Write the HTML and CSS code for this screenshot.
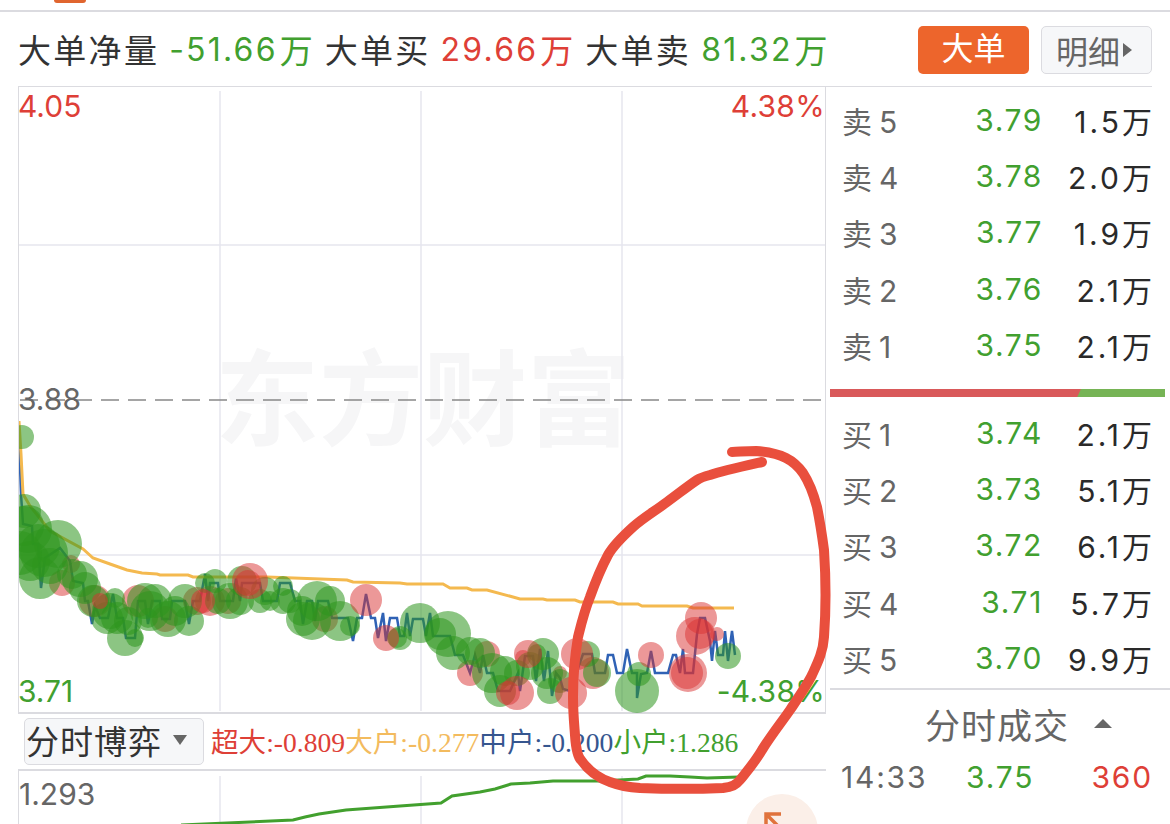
FILE: index.html
```html
<!DOCTYPE html>
<html>
<head>
  <meta name="viewport" content="width=device-width, initial-scale=1">
  <link rel="stylesheet" href="styles.css">
</head>
<body>
<div class="page">
  <div class="topbar"><div class="toptab"></div></div>

  <div class="head">
    <div class="summary">
      <span class="name">大单净量</span><span class="num green">-51.66</span><span class="unit green">万</span>
      <span class="name">大单买</span><span class="num red">29.66</span><span class="unit red">万</span>
      <span class="name">大单卖</span><span class="num green">81.32</span><span class="unit green">万</span>
    </div>
    <div class="btn-on">大单</div>
    <div class="btn-off">明细<span class="arrow-right"></span></div>
  </div>

  <div class="main">
    <div class="left">
      <div class="chart">
        <div class="watermark">东方财富</div>
        <svg class="plot" viewBox="18 86 808 627" width="808" height="627">
          <defs><clipPath id="plotclip"><rect x="19" y="87" width="806" height="625"/></clipPath></defs>
          <g class="grid">
            <path d="M220 90V710M421 90V710M622 90V710M19 244H825M19 554H825"/>
          </g>
          <path class="dash" d="M20 399H825"/>
          <g clip-path="url(#plotclip)">
            <polyline class="line-blue" points="19,437 21,493 23,523 32,525 33,543 38,543 41,587 45,557 60,547 70,560 73,580 83,582 85,600 88,600 92,623 95,605 100,617 108,617 113,593 117,617 123,617 126,637 135,637 138,600 145,600 148,623 152,600 160,600 162,618 170,618 172,600 185,600 189,623 193,600 200,600 205,573 208,600 210,582 218,582 220,600 233,600 236,577 240,600 242,582 260,582 263,600 277,600 280,582 290,582 295,600 300,600 303,623 307,600 312,600 315,620 318,600 328,600 332,617 348,617 353,640 357,617 362,617 366,593 371,617 375,617 378,637 383,612 386,640 390,617 397,617 400,635 404,635 407,612 410,635 413,618 423,618 426,635 430,612 433,635 450,635 455,654 463,654 470,672 475,654 480,672 483,654 487,672 493,672 498,690 510,690 518,672 520,690 525,655 533,655 536,680 540,648 544,680 548,650 552,695 556,672 560,677 563,688 570,690 583,653 592,653 595,672 605,672 608,654 613,654 617,672 623,672 627,648 632,672 637,672 637,697 641,673 647,672 651,650 655,672 668,672 673,654 676,654 680,672 683,648 685,672 693,672 697,633 700,617 705,617 710,640 712,660 715,630 718,654 723,654 725,630 728,660 732,630 735,654"/>
            <polyline class="line-yellow" points="19,420 21,453 23,493 30,505 50,530 83,548 93,557 110,563 127,569 142,572 157,573 160,574 188,574 193,576 267,576 347,579 353,581 400,582 407,583 443,583 450,587 467,587 472,589 487,589 513,596 520,598 543,598 547,599 575,599 580,601 613,601 618,603 638,603 642,605 687,605 693,607 734,607"/>
            <g class="dots-red">
              <circle cx="62" cy="582" r="13"/><circle cx="71" cy="563" r="9"/><circle cx="95" cy="600" r="16"/><circle cx="138" cy="600" r="16"/><circle cx="165" cy="618" r="13"/><circle cx="197" cy="600" r="14"/><circle cx="210" cy="600" r="15"/><circle cx="228" cy="600" r="13"/><circle cx="325" cy="618" r="13"/><circle cx="487" cy="653" r="13"/><circle cx="470" cy="672" r="13"/><circle cx="523" cy="657" r="8"/><circle cx="560" cy="672" r="7"/><circle cx="593" cy="672" r="16"/>
            </g>
            <g class="dots-green">
              <circle cx="22" cy="436" r="12"/><circle cx="24" cy="510" r="17"/><circle cx="28" cy="528" r="24"/><circle cx="58" cy="543" r="24"/><circle cx="44" cy="552" r="24"/><circle cx="40" cy="577" r="21"/><circle cx="30" cy="560" r="20"/><circle cx="24" cy="525" r="20"/><circle cx="38" cy="545" r="22"/><circle cx="50" cy="565" r="18"/><circle cx="20" cy="552" r="22"/><circle cx="72" cy="573" r="15"/><circle cx="80" cy="578" r="18"/><circle cx="85" cy="587" r="16"/><circle cx="93" cy="600" r="16"/><circle cx="115" cy="597" r="10"/><circle cx="107" cy="617" r="16"/><circle cx="117" cy="617" r="16"/><circle cx="110" cy="610" r="18"/><circle cx="128" cy="620" r="14"/><circle cx="125" cy="637" r="18"/><circle cx="135" cy="637" r="9"/><circle cx="145" cy="600" r="18"/><circle cx="155" cy="600" r="17"/><circle cx="150" cy="610" r="20"/><circle cx="148" cy="617" r="10"/><circle cx="168" cy="618" r="18"/><circle cx="175" cy="610" r="15"/><circle cx="189" cy="620" r="15"/><circle cx="185" cy="600" r="17"/><circle cx="205" cy="582" r="10"/><circle cx="215" cy="580" r="12"/><circle cx="218" cy="600" r="13"/><circle cx="230" cy="600" r="18"/><circle cx="240" cy="600" r="14"/><circle cx="242" cy="580" r="15"/><circle cx="260" cy="600" r="12"/><circle cx="265" cy="590" r="14"/><circle cx="270" cy="600" r="10"/><circle cx="283" cy="585" r="10"/><circle cx="283" cy="600" r="13"/><circle cx="290" cy="600" r="12"/><circle cx="302" cy="610" r="15"/><circle cx="303" cy="618" r="17"/><circle cx="312" cy="620" r="19"/><circle cx="317" cy="600" r="20"/><circle cx="330" cy="600" r="15"/><circle cx="340" cy="620" r="20"/><circle cx="350" cy="625" r="10"/><circle cx="397" cy="637" r="10"/><circle cx="400" cy="637" r="12"/><circle cx="420" cy="622" r="20"/><circle cx="448" cy="633" r="23"/><circle cx="440" cy="633" r="16"/><circle cx="453" cy="652" r="17"/><circle cx="470" cy="650" r="14"/><circle cx="480" cy="652" r="15"/><circle cx="492" cy="672" r="20"/><circle cx="505" cy="670" r="15"/><circle cx="500" cy="690" r="16"/><circle cx="517" cy="672" r="13"/><circle cx="530" cy="665" r="14"/><circle cx="543" cy="653" r="16"/><circle cx="537" cy="652" r="9"/><circle cx="547" cy="672" r="16"/><circle cx="550" cy="690" r="13"/><circle cx="560" cy="680" r="12"/><circle cx="587" cy="653" r="13"/><circle cx="597" cy="672" r="14"/><circle cx="637" cy="690" r="22"/><circle cx="639" cy="673" r="12"/><circle cx="728" cy="655" r="13"/>
            </g>
            <g class="dots-red">
              <circle cx="100" cy="600" r="8"/><circle cx="203" cy="600" r="12"/><circle cx="250" cy="580" r="18"/><circle cx="248" cy="582" r="13"/><circle cx="366" cy="599" r="16"/><circle cx="386" cy="637" r="13"/><circle cx="517" cy="692" r="17"/><circle cx="508" cy="692" r="12"/><circle cx="528" cy="653" r="14"/><circle cx="571" cy="692" r="16"/><circle cx="577" cy="653" r="16"/><circle cx="651" cy="654" r="13"/><circle cx="688" cy="672" r="19"/><circle cx="687" cy="672" r="16"/><circle cx="701" cy="617" r="16"/><circle cx="695" cy="635" r="19"/><circle cx="700" cy="633" r="15"/><circle cx="717" cy="633" r="7"/>
            </g>
          </g>
        </svg>
        <span class="tag tag-tl red">4.05</span>
        <span class="tag tag-tr red">4.38%</span>
        <span class="tag tag-ml gray">3.88</span>
        <span class="tag tag-bl green">3.71</span>
        <span class="tag tag-br green">-4.38%</span>
      </div>

      <div class="tool">
        <div class="select">分时博弈<span class="arrow-down"></span></div>
        <div class="legend">
          <span class="red">超大:-0.809</span><span class="yellow">大户:-0.277</span><span class="blue">中户:-0.200</span><span class="green">小户:1.286</span>
        </div>
      </div>

      <div class="subchart">
        <svg class="plot" viewBox="18 770 808 54" width="808" height="54">
          <path class="grid-line" d="M220 775V824M421 775V824M622 775V824"/>
          <polyline class="line-green" points="181,824 250,821 293,819 305,816 319,813 346,809 400,805 441,802 452,795 480,791 495,788 511,783 530,782 553,780 600,780 638,778 646,775 670,775 690,776 707,777 739,776"/>
          <ellipse class="fold-bg" cx="782" cy="830" rx="36" ry="37"/>
          <path class="fold-arrow" d="M766 824V813H781M767 814L781 828"/>
        </svg>
        <span class="tag tag-sub gray">1.293</span>
      </div>
    </div>

    <div class="side">
      <div class="quotes sell">
        <div class="row"><span class="lab">卖<i>5</i></span><span class="price">3.79</span><span class="vol">1.5万</span></div>
        <div class="row"><span class="lab">卖<i>4</i></span><span class="price">3.78</span><span class="vol">2.0万</span></div>
        <div class="row"><span class="lab">卖<i>3</i></span><span class="price">3.77</span><span class="vol">1.9万</span></div>
        <div class="row"><span class="lab">卖<i>2</i></span><span class="price">3.76</span><span class="vol">2.1万</span></div>
        <div class="row"><span class="lab">卖<i>1</i></span><span class="price">3.75</span><span class="vol">2.1万</span></div>
      </div>
      <div class="ratio"><div class="ratio-red"></div><div class="ratio-green"></div></div>
      <div class="quotes buy">
        <div class="row"><span class="lab">买<i>1</i></span><span class="price">3.74</span><span class="vol">2.1万</span></div>
        <div class="row"><span class="lab">买<i>2</i></span><span class="price">3.73</span><span class="vol">5.1万</span></div>
        <div class="row"><span class="lab">买<i>3</i></span><span class="price">3.72</span><span class="vol">6.1万</span></div>
        <div class="row"><span class="lab">买<i>4</i></span><span class="price">3.71</span><span class="vol">5.7万</span></div>
        <div class="row"><span class="lab">买<i>5</i></span><span class="price">3.70</span><span class="vol">9.9万</span></div>
      </div>
      <div class="trades">
        <div class="trades-title">分时成交<span class="arrow-up"></span></div>
        <div class="trade"><span class="gray trade-time">14:33</span><span class="green trade-price">3.75</span><span class="red">360</span></div>
      </div>
    </div>
  </div>

  <svg class="scribble" viewBox="0 0 1170 824" width="1170" height="824">
    <path d="M762 462C740 467 722 471 710 475C702 477 700 478 697 480C688 486 678 494 667 502C655 511 643 518 633 527C622 537 613 546 608 555C600 570 595 583 590 597C584 612 581 625 578 637C575 655 573 678 573 697C573 712 574 722 575 735C576 750 578 757 581 760C588 770 598 778 610 782C618 785 625 787 640 788C665 789 700 789 723 788C732 787 736 785 740 780C748 770 755 762 762 750C772 734 781 723 790 710C800 695 807 685 812 675C818 662 823 652 824 637C826 610 826 580 824 550C822 535 820 522 817 507C813 492 809 482 803 473C798 466 794 462 786 458C778 454 770 452 756 451C745 451 738 452 732 452"/>
  </svg>
</div>
</body>
</html>
```
FILE: styles.css
```css
* {
  box-sizing: border-box;
}

body {
  margin: 0;
  background: #fff;
  font-family: "Inter", "Noto Sans CJK SC", sans-serif;
  color: #333;
}

.page {
  position: relative;
  width: 1170px;
  height: 824px;
  overflow: hidden;
}

.green { color: #41a02f; }
.red { color: #de3f37; }
.gray { color: #666; }
.yellow { color: #f3bb5e; }
.blue { color: #36568f; }

.topbar {
  height: 12px;
  border-bottom: 2px solid #dbdbe0;
}
.toptab {
  width: 32px;
  height: 3px;
  margin-left: 54px;
  background: #e0652f;
  border-radius: 0 0 3px 3px;
}

.head {
  display: flex;
  align-items: center;
  height: 75px;
  margin: 0 18px;
  border-bottom: 1px solid #dbdbe0;
}
.summary {
  flex: 1;
  display: flex;
  align-items: center;
  white-space: nowrap;
}
.name {
  font-size: 33px;
  letter-spacing: 2.3px;
  margin-right: 10px;
}
.num {
  font-size: 32px;
  letter-spacing: 2.2px;
}
.unit {
  font-size: 33px;
  margin: 0 12px 0 2px;
}
.btn-on {
  width: 111px;
  height: 48px;
  margin: 2px 12px 0 0;
  background: #ed652c;
  border-radius: 5px;
  color: #fff;
  font-size: 32px;
  line-height: 46px;
  text-align: center;
}
.btn-off {
  display: flex;
  align-items: center;
  width: 111px;
  height: 48px;
  margin-top: 2px;
  padding-left: 14px;
  background: #f6f7f9;
  border: 1px solid #dbdbe0;
  border-radius: 5px;
  color: #666;
  font-size: 32px;
}
.arrow-right {
  width: 0;
  height: 0;
  margin-left: 3px;
  border-left: 9px solid #666;
  border-top: 7px solid transparent;
  border-bottom: 7px solid transparent;
}

.main {
  display: flex;
}
.left {
  width: 826px;
  padding-left: 18px;
  flex: none;
}

.chart {
  position: relative;
  width: 808px;
  height: 627px;
  border-left: 1px solid #dbdbe0;
  border-right: 1px solid #dbdbe0;
  border-bottom: 2px solid #dbdbe0;
}
.plot {
  position: absolute;
  left: -1px;
  top: 0;
  display: block;
}
.grid path, .grid-line {
  fill: none;
  stroke: #e6e6ee;
  stroke-width: 1.5;
}
.dash {
  fill: none;
  stroke: #888;
  stroke-width: 1.5;
  stroke-dasharray: 18 9;
}
.line-blue {
  fill: none;
  stroke: #2f62b5;
  stroke-width: 2.5;
}
.line-yellow {
  fill: none;
  stroke: #f4b94f;
  stroke-width: 3;
}
.line-green {
  fill: none;
  stroke: #42a02e;
  stroke-width: 3;
}
.dots-green circle {
  fill: rgba(46, 150, 30, .55);
}
.dots-red circle {
  fill: rgba(218, 50, 50, .5);
}
.watermark {
  position: absolute;
  left: 196px;
  top: 253px;
  font-size: 104px;
  font-weight: 700;
  letter-spacing: 0;
  line-height: 120px;
  color: #f6f6f7;
  white-space: nowrap;
}
.tag {
  position: absolute;
  font-size: 30px;
  line-height: 34px;
  white-space: nowrap;
}
.tag-tl { left: -1px; top: 2px; }
.tag-tr { right: 0; top: 2px; letter-spacing: .3px; }
.tag-ml { left: -1px; top: 295px; }
.tag-bl { left: -1px; top: 587px; }
.tag-br { right: 0; top: 587px; letter-spacing: .3px; }
.tag-sub { left: 0; top: 6px; }

.tool {
  display: flex;
  align-items: center;
  height: 57px;
  padding-left: 6px;
  border-bottom: 2px solid #dbdbe0;
}
.select {
  display: flex;
  align-items: center;
  width: 180px;
  height: 47px;
  padding: 0 0 3px 1px;
  background: #f6f7f9;
  border: 1px solid #dbdbe0;
  border-radius: 5px;
  font-size: 33px;
  letter-spacing: 1px;
}
.arrow-down {
  width: 0;
  height: 0;
  margin-left: 11px;
  border-top: 10px solid #666;
  border-left: 7px solid transparent;
  border-right: 7px solid transparent;
}
.legend {
  margin: 0 0 4px 7px;
  font-family: "Liberation Serif", "Noto Sans CJK SC", serif;
  font-size: 27.6px;
  white-space: nowrap;
}

.subchart {
  position: relative;
  height: 54px;
  width: 808px;
  border-left: 1px solid #dbdbe0;
}
.fold-bg {
  fill: #fbefe8;
}
.fold-arrow {
  fill: none;
  stroke: #e0733c;
  stroke-width: 3.5;
}

.side {
  flex: 1;
  padding-left: 4px;
}
.sell {
  height: 294px;
  padding-top: 5px;
}
.buy {
  padding-top: 8px;
  height: 293px;
  border-bottom: 2px solid #dbdbe0;
}
.row {
  display: flex;
  align-items: center;
  height: 56.2px;
  font-size: 30px;
  padding-left: 12px;
}
.lab {
  width: 112px;
  color: #666;
}
.lab i {
  font-style: normal;
  margin-left: 7px;
}
.price {
  width: 89px;
  text-align: right;
  letter-spacing: 1.6px;
  color: #41a02f;
}
.vol {
  width: 112px;
  text-align: right;
  letter-spacing: 3px;
  color: #2a2a2a;
}
.ratio {
  display: flex;
  height: 8px;
  width: 335px;
  margin-top: 8px;
}
.ratio-red {
  width: 246px;
  background: #d9595a;
}
.ratio-green {
  flex: 1;
  background: linear-gradient(115deg, #d9595a 0 4px, #76b455 5px);
}
.trades {
  padding: 11px 17px 0 11px;
}
.trades-title {
  display: flex;
  align-items: center;
  padding-left: 84px;
  font-size: 35px;
  letter-spacing: 1px;
  color: #666;
  height: 44px;
}
.arrow-up {
  width: 0;
  height: 0;
  margin-left: 25px;
  border-bottom: 9px solid #666;
  border-left: 9px solid transparent;
  border-right: 9px solid transparent;
}
.trade {
  display: flex;
  margin-top: 14px;
  font-size: 30px;
  letter-spacing: 1.8px;
}
.trade-time {
  width: 125px;
}
.trade-price {
  flex: 1;
}

.scribble {
  position: absolute;
  left: 0;
  top: 0;
  pointer-events: none;
}
.scribble path {
  fill: none;
  stroke: #e94f3d;
  stroke-width: 10;
  stroke-linecap: round;
  stroke-linejoin: round;
}
```
